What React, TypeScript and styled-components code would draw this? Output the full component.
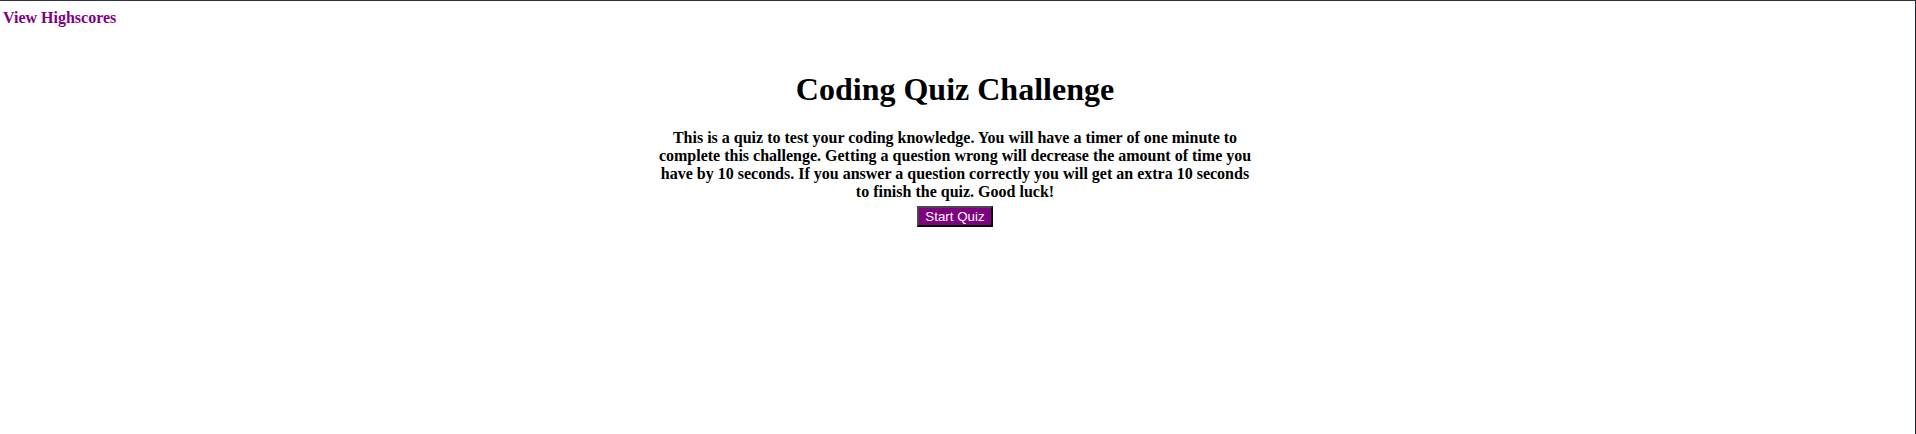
import { createGlobalStyle, styled } from "styled-components";

const colors = {
  purple: "#800080",
  black: "#000000",
  white: "#ffffff",
  frameTop: "#2d3338",
  frameSide: "#1b1f3a",
  buttonLight: "#4a4a4a",
};

const GlobalStyle = createGlobalStyle`
  html, body {
    margin: 0;
    padding: 0;
    background-color: ${colors.white};
  }

  body {
    font-family: "Liberation Serif", "Times New Roman", serif;
    font-size: 16px;
    color: ${colors.black};
  }
`;

const PageFrame = styled.div`
  box-sizing: border-box;
  height: 434px;
  border-top: 1px solid ${colors.frameTop};
  border-right: 1px solid ${colors.frameSide};
  overflow: hidden;
`;

const TopBar = styled.header`
  display: flex;
  padding: 8px 0 0 3px;
`;

const HighscoresLink = styled.a`
  color: ${colors.purple};
  font-weight: 700;
  text-decoration: none;
  cursor: pointer;
`;

const QuizSection = styled.main`
  display: flex;
  flex-direction: column;
  align-items: center;
  padding: 44px 5px 0 0;
`;

const QuizTitle = styled.h1`
  margin: 0 0 21px;
  font-size: 32px;
  font-weight: 700;
`;

const QuizIntro = styled.p`
  width: 600px;
  margin: 0 0 5px;
  font-weight: 700;
  text-align: center;
`;

const StartButton = styled.button`
  padding: 1px 6px;
  background-color: ${colors.purple};
  color: ${colors.white};
  font-family: "Liberation Sans", Arial, sans-serif;
  font-size: 13.333px;
  border-width: 2px;
  border-style: solid;
  border-color: ${colors.buttonLight} ${colors.black} ${colors.black}
    ${colors.buttonLight};
  cursor: pointer;
`;

const App = () => {
  return (
    <>
      <GlobalStyle />
      <PageFrame>
        <TopBar>
          <HighscoresLink>View Highscores</HighscoresLink>
        </TopBar>
        <QuizSection>
          <QuizTitle>Coding Quiz Challenge</QuizTitle>
          <QuizIntro>
            This is a quiz to test your coding knowledge. You will have a timer
            of one minute to complete this challenge. Getting a question wrong
            will decrease the amount of time you have by 10 seconds. If you
            answer a question correctly you will get an extra 10 seconds to
            finish the quiz. Good luck!
          </QuizIntro>
          <StartButton>Start Quiz</StartButton>
        </QuizSection>
      </PageFrame>
    </>
  );
};

export default App;
